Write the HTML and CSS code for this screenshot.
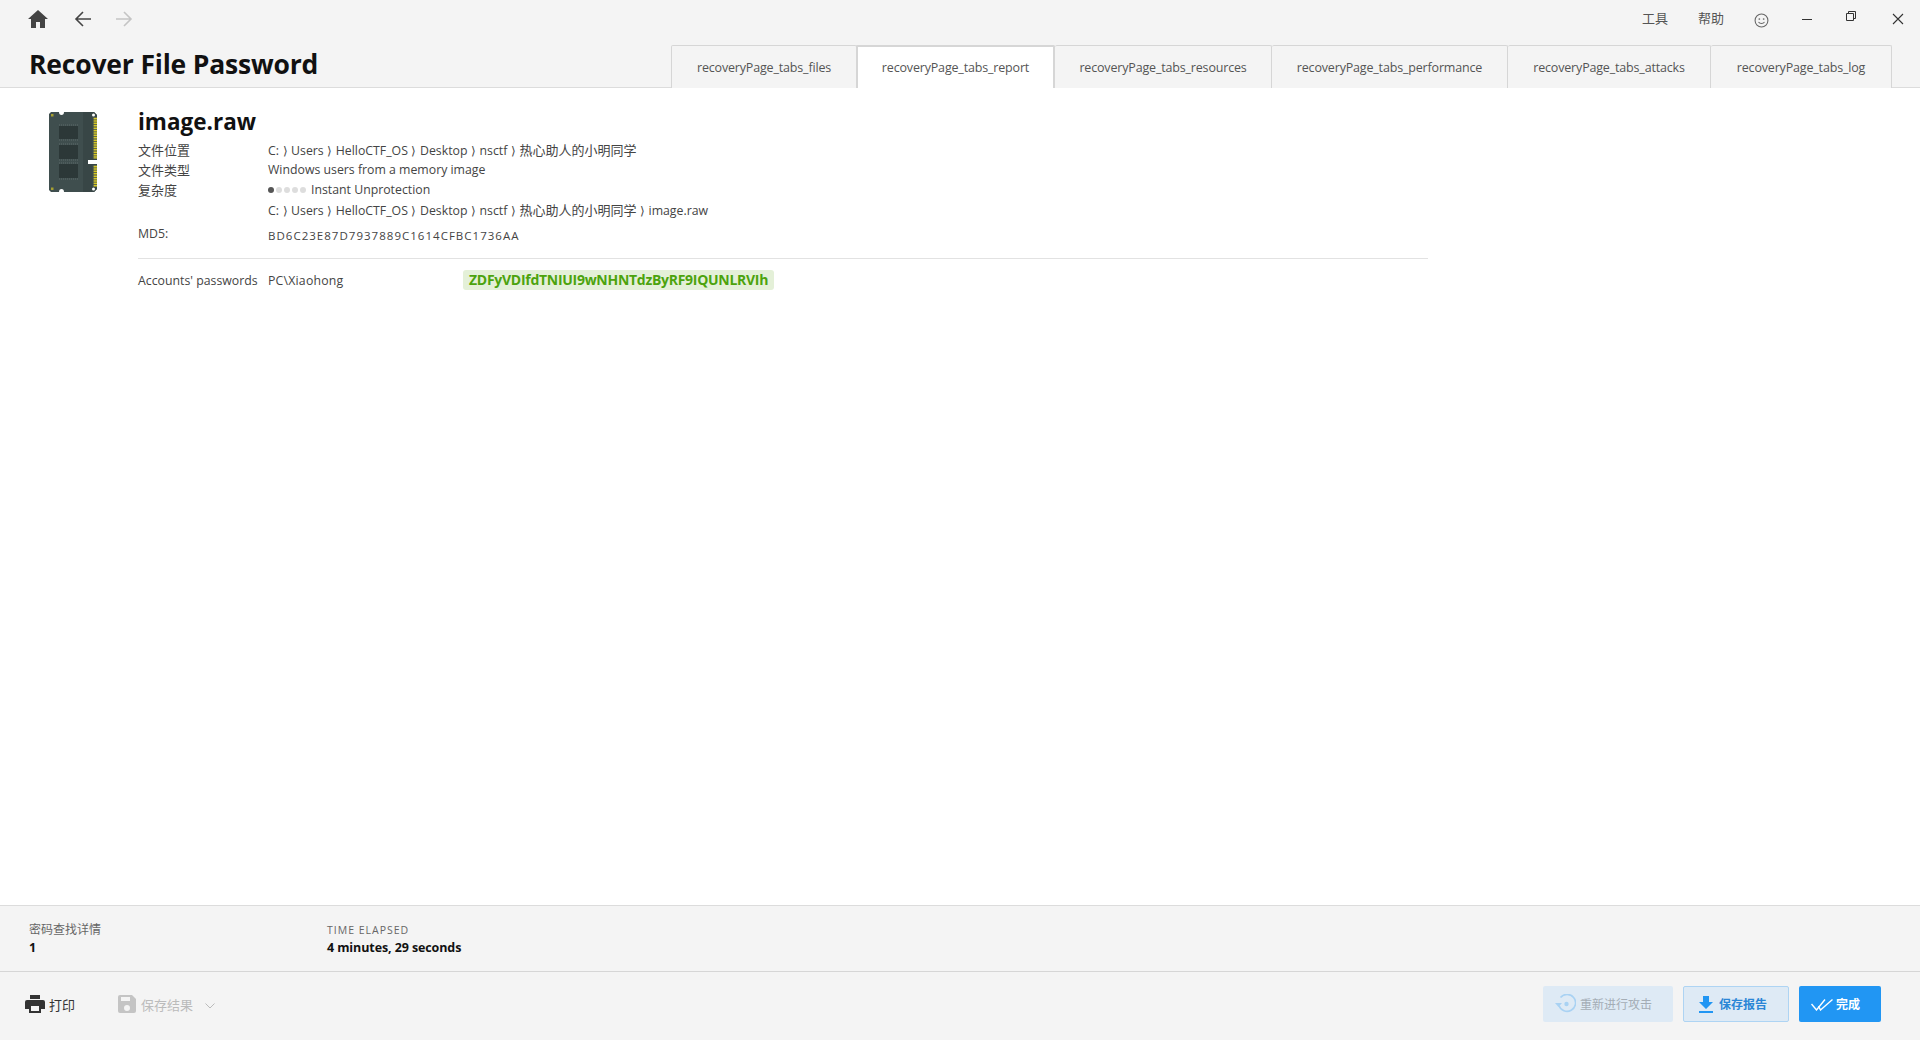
FILE: index.html
```html
<!DOCTYPE html>
<html lang="zh">
<head>
<meta charset="utf-8">
<title>Recover File Password</title>
<link rel="stylesheet" href="styles.css">
</head>
<body>
<div class="app">
  <header class="header">
    <div class="topbar">
      <nav class="nav">
        <svg class="ic-home" viewBox="0 0 20 18"><path d="M10 0 0 9h3v9h5v-6h4v6h5V9h3z" fill="#444"/></svg>
        <svg class="ic-arrow" viewBox="0 0 20 20"><path d="M18 10H3M10 3l-7 7 7 7" fill="none" stroke="#444" stroke-width="1.6"/></svg>
        <svg class="ic-arrow" viewBox="0 0 20 20"><path d="M2 10h15M10 3l7 7-7 7" fill="none" stroke="#c4c4c4" stroke-width="1.6"/></svg>
      </nav>
      <div class="winbar">
        <span class="menu menu-tools">工具</span>
        <span class="menu menu-help">帮助</span>
        <svg class="ic-smile" viewBox="0 0 14 14"><g fill="none" stroke="#666"><circle cx="7" cy="7" r="6"/><path d="M4.2 8.4c1.4 1.8 4.2 1.8 5.6 0"/></g><circle cx="5" cy="5.6" r=".8" fill="#666"/><circle cx="9" cy="5.6" r=".8" fill="#666"/></svg>
        <svg class="ic-min" viewBox="0 0 10 10"><path d="M0 5.5h10" stroke="#333" stroke-width="1"/></svg>
        <svg class="ic-restore" viewBox="0 0 10 10"><path d="M2.5 2.5V.5h7v7h-2M.5 2.5h7v7h-7z" fill="none" stroke="#333"/></svg>
        <svg class="ic-close" viewBox="0 0 12 12"><path d="M1 1l10 10M11 1 1 11" stroke="#333" stroke-width="1.1"/></svg>
      </div>
    </div>
    <div class="titlebar">
      <h1 class="title">Recover File Password</h1>
      <div class="tabs">
        <div class="tab tab-files">recoveryPage_tabs_files</div>
        <div class="tab tab-active tab-report">recoveryPage_tabs_report</div>
        <div class="tab tab-res">recoveryPage_tabs_resources</div>
        <div class="tab tab-perf">recoveryPage_tabs_performance</div>
        <div class="tab tab-att">recoveryPage_tabs_attacks</div>
        <div class="tab tab-log">recoveryPage_tabs_log</div>
      </div>
    </div>
  </header>

  <main class="main">
    <svg class="ram" viewBox="0 0 48 80">
      <path d="M2 0h8a2.500 3 0 0 0 5 0h30l3 3v45h-9v4h9v25l-3 3H15a2.500 3 0 0 0-5 0H2l-2-2V2z" fill="#3f4e4e"/>
      <path d="M34 0h11l3 3v45h-9v4h9v25l-3 3H34z" fill="#384646"/>
      <g fill="#2c3838"><rect x="10" y="14" width="19" height="13"/><rect x="10" y="33" width="19" height="14"/><rect x="10" y="52" width="19" height="14"/></g>
      <path d="M10 13h19M10 28h19M10 32h19M10 48h19M10 51h19M10 67h19" stroke="#6c7a7a" stroke-width=".7" stroke-dasharray="1 1"/>
      <g fill="#d6c828"><rect x="44" y="5" width="4" height="42"/><rect x="44" y="53" width="4" height="22"/></g>
      <path d="M44 5v42M44 53v22" stroke="#3f4e4e" stroke-width="1.200"/>
      <path d="M46 5v42M46 53v22" stroke="#3f4e4e" stroke-width="4" stroke-dasharray=".8 1.600"/>
      <g fill="#fff"><circle cx="44.500" cy="3" r="1.500"/><circle cx="44.500" cy="77" r="1.500"/></g>
      <g fill="#a8a030"><rect x="2" y="2" width="2.500" height="2.500"/><rect x="2" y="75.500" width="2.500" height="2.500"/></g>
    </svg>
    <section class="report">
      <h2 class="filename">image.raw</h2>
      <div class="info">
        <div class="row"><span class="label cjk">文件位置</span><span class="path">C: ⟩ Users ⟩ HelloCTF_OS ⟩ Desktop ⟩ nsctf ⟩ <span class="cjk">热心助人的小明同学</span></span></div>
        <div class="row"><span class="label cjk">文件类型</span><span>Windows users from a memory image</span></div>
        <div class="row"><span class="label cjk">复杂度</span><span class="complexity"><span class="dots"><i class="dot dot-on"></i><i class="dot"></i><i class="dot"></i><i class="dot"></i><i class="dot"></i></span>Instant Unprotection</span></div>
        <div class="row"><span class="label"></span><span class="path">C: ⟩ Users ⟩ HelloCTF_OS ⟩ Desktop ⟩ nsctf ⟩ <span class="cjk">热心助人的小明同学</span> ⟩ image.raw</span></div>
        <div class="row row-md5"><span class="label">MD5:</span><span class="md5">BD6C23E87D7937889C1614CFBC1736AA</span></div>
      </div>
      <div class="accounts">
        <span class="label">Accounts' passwords</span>
        <span class="user">PC\Xiaohong</span>
        <span class="password">ZDFyVDIfdTNIUI9wNHNTdzByRF9IQUNLRVIh</span>
      </div>
    </section>
  </main>

  <section class="stats">
    <div class="stat stat-a"><div class="stat-label">密码查找详情</div><div class="stat-value">1</div></div>
    <div class="stat"><div class="stat-label stat-caps">TIME ELAPSED</div><div class="stat-value">4 minutes, 29 seconds</div></div>
  </section>

  <footer class="footer">
    <div class="actions">
      <div class="action">
        <svg class="ic-print" viewBox="0 0 20 18"><path d="M5 0h10v4H5zM2 5h16a2 2 0 0 1 2 2v7h-4v4H4v-4H0V7a2 2 0 0 1 2-2zm4 6v5h8v-5z" fill="#333"/></svg>
        <span>打印</span>
      </div>
      <div class="action action-off">
        <svg class="ic-save" viewBox="0 0 18 18"><path d="M2 0h12l4 4v12a2 2 0 0 1-2 2H2a2 2 0 0 1-2-2V2a2 2 0 0 1 2-2zm1 2v4h9V2zm6 8a3 3 0 1 0 0 6 3 3 0 0 0 0-6z" fill="#c4c4c4"/></svg>
        <span>保存结果</span>
        <svg class="ic-chev" viewBox="0 0 10 6"><path d="M.5.5 5 5 9.500.5" fill="none" stroke="#bbb"/></svg>
      </div>
    </div>
    <div class="buttons">
      <div class="btn btn-disabled">
        <svg class="ic-retry" viewBox="0 0 21 20"><g fill="none" stroke="#a9d2f3" stroke-width="1.600"><path d="M5.500 3.500A8.500 8.500 0 1 1 4 11.500"/></g><path d="M0 9h7l-3.500 4z" fill="#a9d2f3"/><circle cx="11.500" cy="10" r="2.200" fill="#a9d2f3"/></svg>
        <span>重新进行攻击</span>
      </div>
      <div class="btn btn-outline">
        <svg class="ic-dl" viewBox="0 0 14 17"><path d="M4 0h6v6h4L7 13 0 6h4zM0 15h14v2H0z" fill="#2196f3"/></svg>
        <span>保存报告</span>
      </div>
      <div class="btn btn-primary">
        <svg class="ic-check" viewBox="0 0 22 13"><path d="M.5 6l5 6L14 1.500M7.500 8l2 4L21.500 1.500" fill="none" stroke="#fff" stroke-width="1.400"/></svg>
        <span>完成</span>
      </div>
    </div>
  </footer>
</div>
</body>
</html>
```
FILE: styles.css
```css
* { box-sizing: border-box; }
html, body { margin: 0; height: 100%; background: #fff; }
body {
  font-family: "Open Sans", "Noto Sans CJK SC", sans-serif;
  font-size: 12.300px;
  color: #444;
  overflow: hidden;
}
.app { display: flex; flex-direction: column; height: 1040px; }
.cjk { font-size: 13px; }
.path { word-spacing: .35px; }

.header { height: 88px; background: #f4f4f4; border-bottom: 1px solid #dcdcdc; display: flex; flex-direction: column; flex: none; }
.topbar { height: 45px; display: flex; justify-content: space-between; flex: none; }
.nav { display: flex; align-items: flex-start; padding: 10px 0 0 28px; }
.ic-home { width: 20px; height: 18px; }
.ic-arrow { width: 20px; height: 20px; margin-top: -1px; }
.nav .ic-arrow:nth-child(2) { margin-left: 25px; }
.nav .ic-arrow:nth-child(3) { margin-left: 21px; }

.winbar { display: flex; align-items: flex-start; padding: 10px 0 0 0; }
.menu { font-size: 13px; line-height: 16px; color: #555; }
.menu-help { margin-left: 30px; }
.ic-smile { width: 15px; height: 15px; margin: 3px 0 0 30px; }
.ic-min { width: 10px; height: 10px; margin: 4px 0 0 33px; }
.ic-restore { width: 10px; height: 10px; margin: 1px 0 0 34px; }
.ic-close { width: 12px; height: 12px; margin: 3px 16px 0 36px; }

.titlebar { flex: 1; display: flex; justify-content: space-between; align-items: flex-end; position: relative; }
.title { margin: 0 0 5px 29px; font-size: 26.500px; line-height: 36px; font-weight: 700; color: #111; letter-spacing: -.18px; }
.tabs { display: flex; margin-right: 28px; height: 43px; margin-bottom: -1px; }
.tab {
  display: flex; align-items: center; justify-content: center;
  background: #f4f4f4;
  border: 1px solid #d6d6d6; border-bottom: 0; border-left: 0;
  border-radius: 2px 2px 0 0;
  font-size: 12.500px; color: #555; letter-spacing: -.17px;
}
.tab-files { width: 186px; border-left: 1px solid #d6d6d6; }
.tab-res { width: 217px; }
.tab-perf { width: 236px; }
.tab-att { width: 203px; }
.tab-log { width: 181px; }
.tab-active { background: #fff; border-top: 2px solid #d6d6d6; border-right: 2px solid #d6d6d6; border-left: 2px solid #d6d6d6; margin-left: -1px; width: 199px; }

.main { flex: 1; display: flex; padding: 24px 0 0 49px; }
.ram { width: 48px; height: 80px; flex: none; }
.report { width: 1290px; margin-left: 41px; }
.filename { margin: -5px 0 0; font-size: 22.500px; line-height: 30px; font-weight: 700; color: #111; }
.info { display: flex; flex-direction: column; padding-bottom: 14px; border-bottom: 1px solid #e2e2e2; margin-top: 3px; }
.row { display: flex; height: 20px; line-height: 20px; white-space: nowrap; }
.label { width: 130px; flex: none; }
.row-md5 { margin-top: 4px; }
.md5 { letter-spacing: 1.020px; font-size: 11.500px; padding-top: 2px; }
.complexity { display: flex; align-items: center; }
.dots { display: flex; gap: 2px; margin-right: 5px; }
.dot { width: 6px; height: 6px; border-radius: 50%; background: #ddd; }
.dot-on { background: #555; }

.accounts { display: flex; align-items: center; margin-top: 11px; height: 20px; white-space: nowrap; }
.user { width: 195px; flex: none; letter-spacing: .2px; }
.password { background: #e4f0d8; color: #4ca30d; font-weight: 700; font-size: 14px; line-height: 20px; border-radius: 3px; padding: 0 6px; letter-spacing: -.28px; }

.stats { flex: none; height: 66px; background: #f4f4f4; border-top: 1px solid #dcdcdc; display: flex; padding: 16px 0 0 29px; }
.stat-a { width: 298px; }
.stat-label { font-size: 12px; line-height: 16px; color: #666; }
.stat-caps { font-size: 10.500px; letter-spacing: 1px; }
.stat-value { font-size: 12.500px; line-height: 20px; font-weight: 700; color: #111; letter-spacing: -.1px; }

.footer { flex: none; height: 69px; background: #f4f4f4; border-top: 1px solid #d6d6d6; display: flex; justify-content: space-between; align-items: flex-start; }
.actions { display: flex; padding: 23px 0 0 25px; }
.action { display: flex; align-items: center; gap: 4px; font-size: 13px; color: #333; height: 18px; }
.action-off { color: #bbb; margin-left: 43px; gap: 5px; }
.ic-print { width: 20px; height: 18px; }
.ic-save { width: 18px; height: 18px; }
.ic-chev { width: 10px; height: 6px; margin: 3px 0 0 7px; }

.buttons { display: flex; gap: 10px; padding: 14px 39px 0 0; }
.btn { height: 36px; border-radius: 2px; display: flex; align-items: center; font-size: 12px; font-weight: 700; }
.btn-disabled { width: 130px; background: #deeaf5; color: #a4adb5; padding-left: 12px; gap: 4px; font-weight: 400; }
.btn-outline { width: 106px; background: #deeaf5; border: 1px solid #aed4f3; color: #2b86d6; padding-left: 15px; gap: 6px; }
.btn-primary { width: 82px; background: #2196f3; color: #fff; padding-left: 12px; gap: 3px; }
.ic-retry { width: 21px; height: 20px; }
.ic-dl { width: 14px; height: 17px; }
.ic-check { width: 22px; height: 13px; }
```
